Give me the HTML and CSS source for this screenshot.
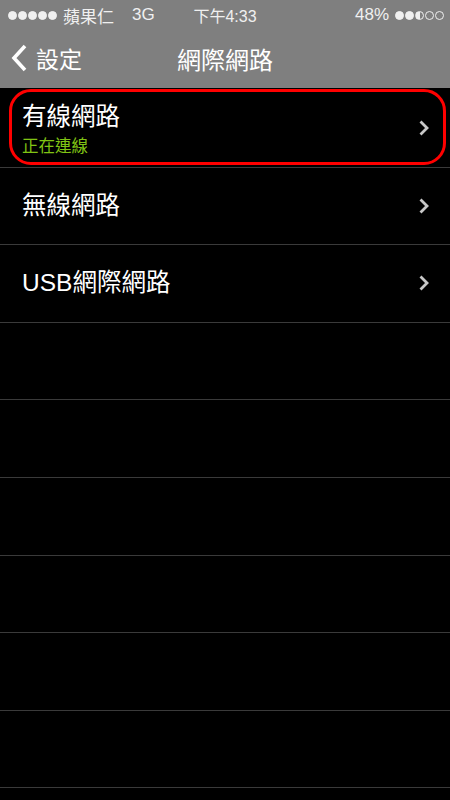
FILE: index.html
```html
<!DOCTYPE html>
<html lang="zh-Hant">
<head>
  <meta charset="UTF-8" />
  <meta name="viewport" content="width=device-width, initial-scale=1.0"/>
  <title>網際網路</title>
  <link rel="stylesheet" href="styles.css">
</head>
<body>

  <header class="top">
    <!-- Status bar -->
    <div class="status">
      <div class="status-left">
        <span class="signal">
          <i class="full"></i><i class="full"></i><i class="full"></i><i class="full"></i><i class="full"></i>
        </span>
        <span>蘋果仁</span>
        <span class="net">3G</span>
      </div>
      <div class="status-time">下午4:33</div>
      <div class="status-right">
        <span>48%</span>
        <span class="signal">
          <i class="full"></i><i class="full"></i><i class="half"></i><i></i><i></i>
        </span>
      </div>
    </div>

    <!-- Nav bar -->
    <nav class="navbar">
      <a class="back">
        <svg width="18" height="28" viewBox="0 0 18 28"><path d="M15 2 L4 14 L15 26" fill="none" stroke="#fff" stroke-width="3.6"/></svg>
        <span>設定</span>
      </a>
      <h1>網際網路</h1>
    </nav>
  </header>

  <main>
    <ul class="list">
      <li class="row highlight">
        <div class="label">
          <span class="title">有線網路</span>
          <span class="sub">正在連線</span>
        </div>
        <svg class="chev" width="10" height="16" viewBox="0 0 10 16"><path d="M1.5 1.5 L8 8 L1.5 14.5" fill="none" stroke="#c8c8c8" stroke-width="2.8"/></svg>
      </li>
      <li class="row">
        <div class="label"><span class="title">無線網路</span></div>
        <svg class="chev" width="10" height="16" viewBox="0 0 10 16"><path d="M1.5 1.5 L8 8 L1.5 14.5" fill="none" stroke="#c8c8c8" stroke-width="2.8"/></svg>
      </li>
      <li class="row">
        <div class="label"><span class="title">USB網際網路</span></div>
        <svg class="chev" width="10" height="16" viewBox="0 0 10 16"><path d="M1.5 1.5 L8 8 L1.5 14.5" fill="none" stroke="#c8c8c8" stroke-width="2.8"/></svg>
      </li>
      <li class="row"></li>
      <li class="row"></li>
      <li class="row"></li>
      <li class="row"></li>
      <li class="row"></li>
      <li class="row"></li>
    </ul>
  </main>

</body>
</html>
```

FILE: styles.css
```css
* {
  box-sizing: border-box;
  margin: 0;
  padding: 0;
  font-family: "Liberation Sans", "Noto Sans CJK TC", sans-serif;
}

body {
  background: #000;
  color: #fff;
  width: 450px;
  height: 800px;
  overflow: hidden;
}

.top {
  background: #7f7f7f;
  height: 88px;
}

.status {
  height: 30px;
  display: flex;
  align-items: center;
  justify-content: space-between;
  padding: 0 6px 0 8px;
  font-size: 17px;
  color: #f0f0f0;
  position: relative;
}

.status-left {
  display: flex;
  gap: 6px;
  align-items: center;
}

.net {
  margin-left: 12px;
}

.status-time {
  position: absolute;
  left: 0;
  right: 0;
  text-align: center;
  font-size: 16px;
  pointer-events: none;
}

.status-right {
  display: flex;
  align-items: center;
  gap: 6px;
}

.signal {
  display: flex;
  gap: 1px;
}

.signal i {
  width: 9px;
  height: 9px;
  border-radius: 50%;
  border: 1px solid #f0f0f0;
}

.signal i.full {
  background: #f0f0f0;
}

.signal i.half {
  background: linear-gradient(90deg, #f0f0f0 50%, transparent 50%);
}

.navbar {
  height: 56px;
  position: relative;
  display: flex;
  align-items: center;
  padding-left: 10px;
}

.back {
  display: flex;
  align-items: center;
  gap: 8px;
  font-size: 23px;
  color: #fff;
}

.navbar h1 {
  position: absolute;
  left: 0;
  right: 0;
  text-align: center;
  font-size: 24px;
  font-weight: normal;
}

.list {
  list-style: none;
  padding-top: 2px;
}

.row {
  height: 77.6px;
  border-bottom: 1.5px solid #3a3a3a;
  display: flex;
  align-items: center;
  justify-content: space-between;
  padding: 0 21px 0 22px;
  position: relative;
}

.label {
  display: flex;
  flex-direction: column;
  gap: 4px;
}

.title {
  font-size: 24.5px;
  line-height: 30px;
}

.sub {
  font-size: 16.5px;
  line-height: 20px;
  color: #80c414;
}

.highlight .label {
  margin-top: 2px;
}

/* red annotation round the first row */
.highlight::after {
  content: "";
  position: absolute;
  left: 9px;
  right: 4px;
  top: -1px;
  bottom: 2px;
  border: 3px solid #f00;
  border-radius: 22px;
}
```
